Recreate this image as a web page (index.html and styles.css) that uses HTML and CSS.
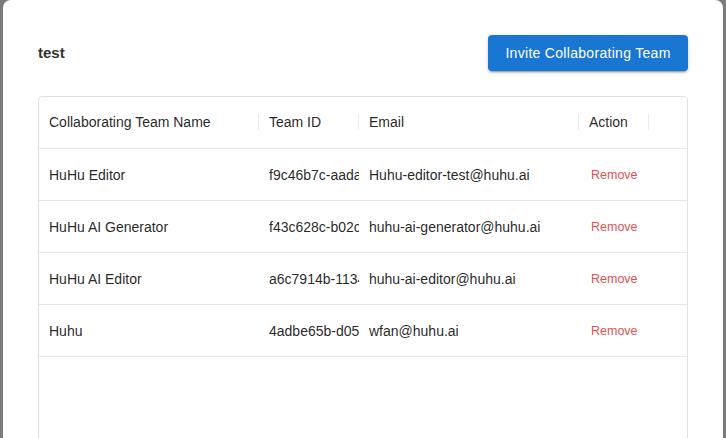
FILE: index.html
```html
<!DOCTYPE html>
<html>
<head>
<meta charset="utf-8">
<link rel="stylesheet" href="styles.css">
</head>
<body>
<div class="modal">
  <div class="head">
    <div class="title">test</div>
    <button class="invite">Invite Collaborating Team</button>
  </div>
  <div class="grid">
    <div class="row hdr">
      <div class="cell">Collaborating Team Name<span class="sep"></span></div>
      <div class="cell">Team ID<span class="sep"></span></div>
      <div class="cell">Email<span class="sep"></span></div>
      <div class="cell">Action<span class="sep"></span></div>
      <div class="cell"></div>
    </div>
    <div class="row">
      <div class="cell">HuHu Editor</div>
      <div class="cell id"><span class="clip">f9c46b7c-aada</span></div>
      <div class="cell em">Huhu-editor-test@huhu.ai</div>
      <div class="cell"><span class="remove">Remove</span></div>
      <div class="cell"></div>
    </div>
    <div class="row">
      <div class="cell">HuHu AI Generator</div>
      <div class="cell id"><span class="clip">f43c628c-b02c</span></div>
      <div class="cell em">huhu-ai-generator@huhu.ai</div>
      <div class="cell"><span class="remove">Remove</span></div>
      <div class="cell"></div>
    </div>
    <div class="row">
      <div class="cell">HuHu AI Editor</div>
      <div class="cell id"><span class="clip">a6c7914b-1134</span></div>
      <div class="cell em">huhu-ai-editor@huhu.ai</div>
      <div class="cell"><span class="remove">Remove</span></div>
      <div class="cell"></div>
    </div>
    <div class="row">
      <div class="cell">Huhu</div>
      <div class="cell id"><span class="clip">4adbe65b-d05</span></div>
      <div class="cell em">wfan@huhu.ai</div>
      <div class="cell"><span class="remove">Remove</span></div>
      <div class="cell"></div>
    </div>
  </div>
</div>
</body>
</html>
```
FILE: styles.css
```css
html, body {
  margin: 0;
  padding: 0;
  height: 100%;
  overflow: hidden;
}
body {
  background: #7b7b7b;
  font-family: "Liberation Sans", Arial, sans-serif;
  color: rgba(0,0,0,0.87);
}
.modal {
  margin-left: 3px;
  width: 720px;
  height: 100vh;
  box-sizing: border-box;
  overflow: hidden;
  background: #fff;
  border-radius: 8px 8px 0 0;
  padding: 35px 35px 0 35px;
}
.head {
  display: flex;
  justify-content: space-between;
  align-items: center;
  height: 36px;
}
.title {
  font-size: 15px;
  line-height: 17px;
  font-weight: bold;
  color: #333;
  margin-top: -2px;
}
.invite {
  width: 200px;
  height: 36px;
  border: none;
  border-radius: 4px;
  background: #1976d2;
  color: #fff;
  font-family: "Liberation Sans", Arial, sans-serif;
  font-size: 14px;
  letter-spacing: 0.3px;
  box-shadow: 0 3px 1px -2px rgba(0,0,0,0.2), 0 2px 2px 0 rgba(0,0,0,0.14), 0 1px 5px 0 rgba(0,0,0,0.12);
  padding: 0;
}
.grid {
  margin-top: 25px;
  border: 1px solid #e0e0e0;
  border-radius: 4px;
  height: 360px;
}
.row {
  display: grid;
  grid-template-columns: 220px 100px 220px 70px 1fr;
  height: 51px;
  border-bottom: 1px solid #e6e6e6;
  font-size: 14px;
}
.row.hdr .cell {
  padding-bottom: 2px;
}
.cell {
  position: relative;
  display: flex;
  align-items: center;
  padding-left: 10px;
  white-space: nowrap;
}
.sep {
  position: absolute;
  right: 0;
  top: 17px;
  height: 16px;
  width: 1px;
  background: #ececec;
}
.clip {
  display: block;
  width: 95px;
  overflow: hidden;
}
.remove {
  margin-left: 2px;
  font-size: 12.5px;
  color: #db5252;
}
```
